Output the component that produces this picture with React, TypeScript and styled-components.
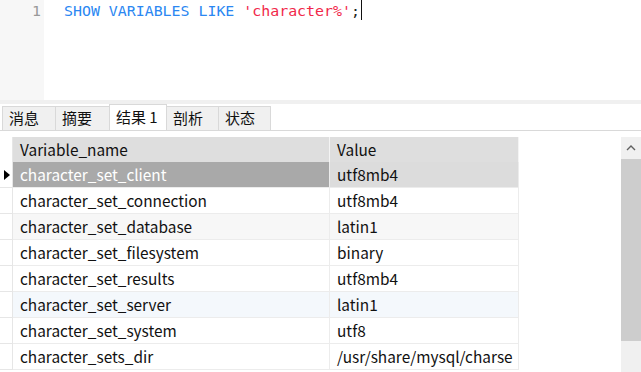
import React from "react";
import styled, { createGlobalStyle } from "styled-components";

const Global = createGlobalStyle`
  html, body { margin: 0; padding: 0; background: #fff; overflow: hidden; }
  #root { width: 641px; height: 372px; overflow: hidden; }
`;

const Page = styled.div`
  width: 641px;
  height: 372px;
  display: flex;
  flex-direction: column;
  background: #fff;
  overflow: hidden;
`;

const Editor = styled.div`
  height: 100px;
  display: flex;
  flex-shrink: 0;
`;

const Gutter = styled.div`
  width: 44px;
  background: #f7f7f7;
  box-sizing: border-box;
  padding-right: 3px;
  text-align: right;
  font-family: "DejaVu Sans Mono", "Liberation Mono", monospace;
  font-size: 14.9px;
  line-height: 22px;
  color: #999;
`;

const Code = styled.div`
  flex: 1;
  padding-left: 20px;
  font-family: "DejaVu Sans Mono", "Liberation Mono", monospace;
  font-size: 14.9px;
  line-height: 22px;
  white-space: pre;
  color: #222;
`;

const Kw = styled.span`
  color: #2b87f2;
`;
const Str = styled.span`
  color: #f1284a;
`;
const Caret = styled.span`
  display: inline-block;
  width: 1px;
  height: 20px;
  background: #111;
  vertical-align: top;
  margin-left: 1px;
`;

const Splitter = styled.div`
  height: 4px;
  background: #f0f0f0;
  flex-shrink: 0;
`;

const TabBar = styled.div`
  height: 26px;
  display: flex;
  align-items: flex-end;
  padding-left: 2px;
  border-bottom: 1px solid #d9d9d9;
  flex-shrink: 0;
`;

const Tab = styled.div<{ $active?: boolean; $w: number }>`
  width: ${(p) => p.$w}px;
  height: ${(p) => (p.$active ? 26 : 24)}px;
  box-sizing: border-box;
  border: 1px solid #d9d9d9;
  border-bottom: none;
  margin-left: -1px;
  background: ${(p) => (p.$active ? "#fff" : "#f0f0f0")};
  font-family: "Noto Sans CJK SC", "Microsoft YaHei", sans-serif;
  font-size: 15px;
  line-height: ${(p) => (p.$active ? 24 : 22)}px;
  padding-left: 6px;
  color: #111;
  &:first-child { margin-left: 0; }
`;

const GridArea = styled.div`
  flex: 1;
  display: flex;
  padding-top: 6px;
  min-height: 0;
`;

const Table = styled.div`
  flex: 1;
  display: grid;
  grid-template-columns: 13px 317px 189px;
  grid-template-rows: 25px;
  grid-auto-rows: 26px;
  align-content: start;
  font-family: "Noto Sans CJK SC", "Microsoft YaHei", sans-serif;
  font-size: 15.4px;
  color: #111;
`;

const Indicator = styled.div<{ $header?: boolean }>`
  border-right: 1px solid #e6e6e6;
  border-bottom: ${(p) => (p.$header ? "none" : "1px solid #e6e6e6")};
  display: flex;
  align-items: center;
  justify-content: center;
  box-sizing: border-box;
`;

const Arrow = styled.div`
  width: 0;
  height: 0;
  border-top: 5px solid transparent;
  border-bottom: 5px solid transparent;
  border-left: 6px solid #000;
  margin-left: 2px;
`;

const HeadCell = styled.div`
  background: #dedede;
  border-right: 1px solid #f4f4f4;
  box-sizing: border-box;
  padding-left: 7px;
  display: flex;
  align-items: center;
  line-height: 1;
`;

type Tone = "plain" | "alt" | "hover" | "selName" | "selValue";

const bg: Record<Tone, string> = {
  plain: "#fff",
  alt: "#f7f7f7",
  hover: "#f4f8fc",
  selName: "#a9a9a9",
  selValue: "#dcdcdc",
};

const Cell = styled.div<{ $tone: Tone }>`
  background: ${(p) => bg[p.$tone]};
  color: ${(p) => (p.$tone === "selName" ? "#fff" : "#111")};
  border-right: 1px solid #ececec;
  border-bottom: 1px solid #ececec;
  box-sizing: border-box;
  padding-left: 7px;
  display: flex;
  align-items: center;
  line-height: 1;
  white-space: nowrap;
  overflow: hidden;
`;

const Scrollbar = styled.div`
  width: 20px;
  flex-shrink: 0;
  display: flex;
  flex-direction: column;
  background: #f0f0f0;
`;

const ScrollBtn = styled.div`
  height: 22px;
  display: flex;
  align-items: center;
  justify-content: center;
`;

const Thumb = styled.div`
  height: 182px;
  background: #cdcdcd;
`;

const rows: { name: string; value: string; tone: Tone }[] = [
  { name: "character_set_client", value: "utf8mb4", tone: "plain" },
  { name: "character_set_connection", value: "utf8mb4", tone: "plain" },
  { name: "character_set_database", value: "latin1", tone: "alt" },
  { name: "character_set_filesystem", value: "binary", tone: "plain" },
  { name: "character_set_results", value: "utf8mb4", tone: "plain" },
  { name: "character_set_server", value: "latin1", tone: "hover" },
  { name: "character_set_system", value: "utf8", tone: "plain" },
  { name: "character_sets_dir", value: "/usr/share/mysql/charse", tone: "plain" },
];

const tabs = [
  { label: "消息", w: 54 },
  { label: "摘要", w: 55 },
  { label: "结果 1", w: 58, active: true },
  { label: "剖析", w: 53 },
  { label: "状态", w: 53 },
];

export default function App() {
  return (
    <>
      <Global />
      <Page>
        <Editor>
          <Gutter>1</Gutter>
          <Code>
            <Kw>SHOW VARIABLES LIKE</Kw> <Str>'character%'</Str>;<Caret />
          </Code>
        </Editor>
        <Splitter />
        <TabBar>
          {tabs.map((t) => (
            <Tab key={t.label} $w={t.w} $active={t.active}>
              {t.label}
            </Tab>
          ))}
        </TabBar>
        <GridArea>
          <Table>
            <Indicator $header />
            <HeadCell>Variable_name</HeadCell>
            <HeadCell>Value</HeadCell>
            {rows.map((r, i) => (
              <React.Fragment key={r.name}>
                <Indicator>{i === 0 && <Arrow />}</Indicator>
                <Cell $tone={i === 0 ? "selName" : r.tone}>{r.name}</Cell>
                <Cell $tone={i === 0 ? "selValue" : r.tone}>{r.value}</Cell>
              </React.Fragment>
            ))}
          </Table>
          <Scrollbar>
            <ScrollBtn>
              <svg width="10" height="6" viewBox="0 0 10 6">
                <path d="M1 5 L5 1 L9 5" fill="none" stroke="#606060" strokeWidth="1.4" />
              </svg>
            </ScrollBtn>
            <Thumb />
          </Scrollbar>
        </GridArea>
      </Page>
    </>
  );
}
